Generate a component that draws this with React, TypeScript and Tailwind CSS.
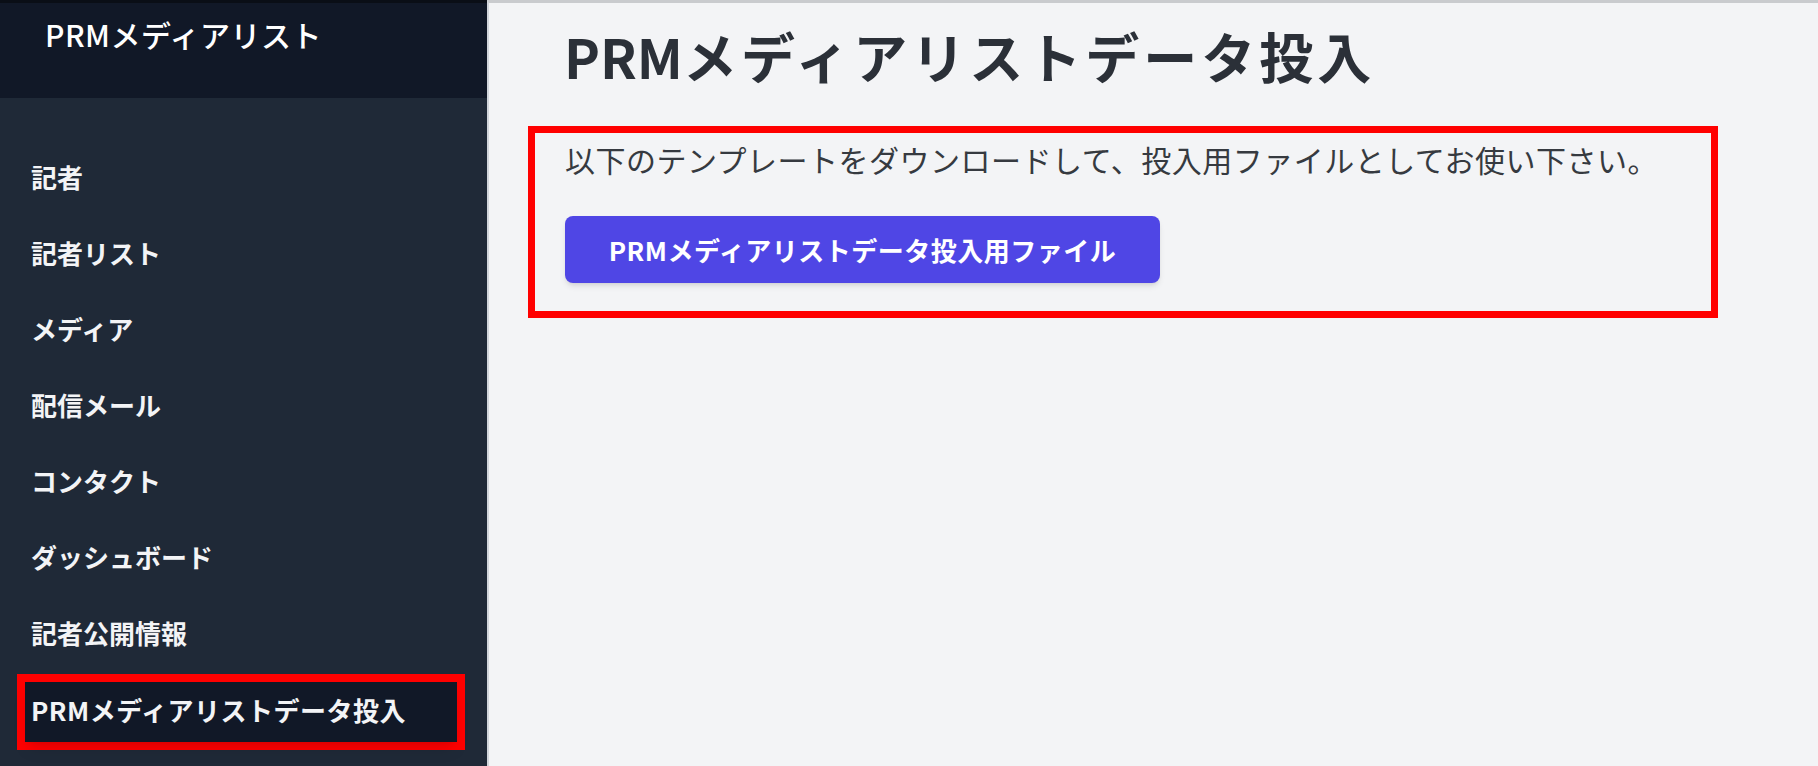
const navItems = [
  '記者',
  '記者リスト',
  'メディア',
  '配信メール',
  'コンタクト',
  'ダッシュボード',
  '記者公開情報',
];

function Sidebar() {
  return (
    <aside className="w-[487px] shrink-0 h-full bg-[#1f2937] flex flex-col">
      <div className="h-[98px] bg-[#111827] border-t-[3px] border-[#0a0e16] pl-[45px] pt-[11px]">
        <span className="text-[30px] leading-[40px] font-medium text-white tracking-[0.5px]">
          PRMメディアリスト
        </span>
      </div>
      <nav className="pt-[44px] pl-[17px]">
        {navItems.map((label) => (
          <div key={label} className="w-[448px] border-[8px] border-transparent">
            <a href="#" className="flex items-center h-[60px] pl-[6px] pb-[8px] text-[26px] font-bold text-gray-100">
              {label}
            </a>
          </div>
        ))}
        <div className="w-[448px] border-[8px] border-[#ff0000]">
          <a href="#" className="flex items-center h-[60px] pl-[6px] pb-[6px] bg-[#111827] shadow-lg text-[26px] font-bold text-gray-100 tracking-[0.5px]">
            PRMメディアリストデータ投入
          </a>
        </div>
      </nav>
    </aside>
  );
}

export default function App() {
  return (
    <div
      className="flex h-screen overflow-hidden bg-[#f3f4f6]"
      style={{ fontFamily: '"Noto Sans CJK JP", "Noto Sans", sans-serif' }}
    >
      <Sidebar />
      <main className="flex-1 border-l-2 border-[#d1d5db] border-t-[3px] border-t-[#c9cbce] pl-[39px] pt-[21px]">
        <h1 className="pl-[36px] text-[54px] leading-[64px] font-bold text-[#2b3038]">
          PRM
          <span className="tracking-[4px]">メディアリストデータ投入</span>
        </h1>
        <section className="mt-[38px] w-[1190px] border-[7px] border-[#ff0000] pl-[30px] pt-[6px] pb-[28px]">
          <p className="text-[30px] leading-[40px] tracking-[0.5px] text-[#363a40]">
            以下のテンプレートをダウンロードして、投入用ファイルとしてお使い下さい。
          </p>
          <button
            type="button"
            className="mt-[37px] w-[595px] h-[67px] rounded-lg bg-[#4f46e5] shadow-md text-[26px] font-bold text-white tracking-[0.5px]"
          >
            PRMメディアリストデータ投入用ファイル
          </button>
        </section>
      </main>
    </div>
  );
}
